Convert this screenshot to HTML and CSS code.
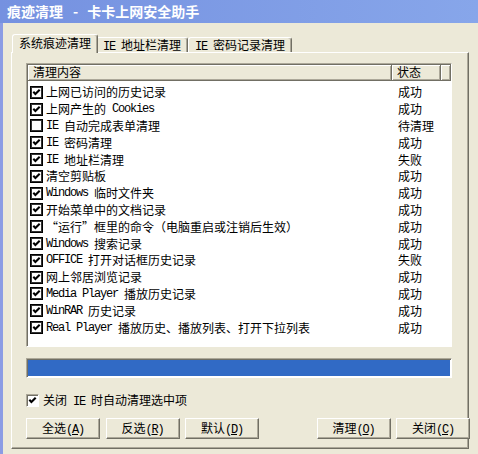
FILE: index.html
```html
<!DOCTYPE html>
<html lang="zh-CN">
<head>
    <meta charset="UTF-8">
    <meta name="viewport" content="width=device-width, initial-scale=1.0">
    <title>痕迹清理 - 卡卡上网安全助手</title>
    <link rel="stylesheet" href="styles.css">
</head>
<body>
    <svg class="defs" width="0" height="0" aria-hidden="true">
        <symbol id="tick" viewBox="0 0 9 9">
            <polyline points="1.3,3.8 3.4,6 7.7,1.7" fill="none" stroke="#000" stroke-width="2.1"/>
        </symbol>
    </svg>

    <div class="window">
        <div class="titlebar">痕迹清理<span class="sep">-</span>卡卡上网安全助手</div>

        <div class="frame">
            <div class="tabs">
                <div class="tab active">系统痕迹清理</div>
                <div class="tab"><span class="lat">IE </span>地址栏清理</div>
                <div class="tab"><span class="lat">IE </span>密码记录清理</div>
            </div>

            <div class="panel">
                <div class="listview">
                    <div class="lv-header">
                        <div class="hd hd-name">清理内容</div>
                        <div class="hd hd-state">状态</div>
                        <div class="hd hd-fill"></div>
                    </div>
                    <ul class="lv-rows">
                        <li class="row"><div class="name"><span class="cb"><svg><use href="#tick"/></svg></span>上网已访问的历史记录</div><div class="state">成功</div></li>
                        <li class="row"><div class="name"><span class="cb"><svg><use href="#tick"/></svg></span>上网产生的<span class="lat"> Cookies</span></div><div class="state">成功</div></li>
                        <li class="row"><div class="name"><span class="cb"></span><span class="lat">IE </span>自动完成表单清理</div><div class="state">待清理</div></li>
                        <li class="row"><div class="name"><span class="cb"><svg><use href="#tick"/></svg></span><span class="lat">IE </span>密码清理</div><div class="state">成功</div></li>
                        <li class="row"><div class="name"><span class="cb"><svg><use href="#tick"/></svg></span><span class="lat">IE </span>地址栏清理</div><div class="state">失败</div></li>
                        <li class="row"><div class="name"><span class="cb"><svg><use href="#tick"/></svg></span>清空剪贴板</div><div class="state">成功</div></li>
                        <li class="row"><div class="name"><span class="cb"><svg><use href="#tick"/></svg></span><span class="lat">Windows </span>临时文件夹</div><div class="state">成功</div></li>
                        <li class="row"><div class="name"><span class="cb"><svg><use href="#tick"/></svg></span>开始菜单中的文档记录</div><div class="state">成功</div></li>
                        <li class="row"><div class="name"><span class="cb"><svg><use href="#tick"/></svg></span>“运行”框里的命令（电脑重启或注销后生效）</div><div class="state">成功</div></li>
                        <li class="row"><div class="name"><span class="cb"><svg><use href="#tick"/></svg></span><span class="lat">Windows </span>搜索记录</div><div class="state">成功</div></li>
                        <li class="row"><div class="name"><span class="cb"><svg><use href="#tick"/></svg></span><span class="lat">OFFICE </span>打开对话框历史记录</div><div class="state">失败</div></li>
                        <li class="row"><div class="name"><span class="cb"><svg><use href="#tick"/></svg></span>网上邻居浏览记录</div><div class="state">成功</div></li>
                        <li class="row"><div class="name"><span class="cb"><svg><use href="#tick"/></svg></span><span class="lat">Media Player </span>播放历史记录</div><div class="state">成功</div></li>
                        <li class="row"><div class="name"><span class="cb"><svg><use href="#tick"/></svg></span><span class="lat">WinRAR </span>历史记录</div><div class="state">成功</div></li>
                        <li class="row"><div class="name"><span class="cb"><svg><use href="#tick"/></svg></span><span class="lat">Real Player </span>播放历史、播放列表、打开下拉列表</div><div class="state">成功</div></li>
                    </ul>
                </div>

                <div class="progress"><div class="progress-fill"></div></div>

                <label class="auto-clean">
                    <span class="box"><svg><use href="#tick"/></svg></span>
                    <span>关闭<span class="lat"> IE </span>时自动清理选中项</span>
                </label>

                <div class="buttons">
                    <button>全选<span class="lat">(<u>A</u>)</span></button>
                    <button>反选<span class="lat">(<u>R</u>)</span></button>
                    <button>默认<span class="lat">(<u>D</u>)</span></button>
                    <button class="push">清理<span class="lat">(<u>O</u>)</span></button>
                    <button>关闭<span class="lat">(<u>C</u>)</span></button>
                </div>
            </div>
        </div>
    </div>
</body>
</html>
```

FILE: styles.css
```css
body {
    margin: 0;
    font-family: "Noto Sans CJK SC", sans-serif;
    font-size: 12px;
    color: #000;
}

.defs {
    position: absolute;
}

.lat {
    font-family: "Liberation Mono", monospace;
    font-size: 12px;
    letter-spacing: -1.2px;
    white-space: pre;
}

.window {
    width: 478px;
    height: 454px;
    background-color: #ece9d8;
    overflow: hidden;
}

.titlebar {
    height: 23px;
    line-height: 22px;
    padding-left: 7px;
    color: white;
    font-size: 14px;
    font-weight: bold;
    background: linear-gradient(to right, #7591e0, #87a6ea);
}

.titlebar .sep {
    margin: 0 9px 0 10px;
}

.frame {
    height: 431px;
    box-sizing: border-box;
    border-left: 3px solid #8b9ce4;
    padding: 11px 0 0 8px;
}

/* tabs */
.tabs {
    display: flex;
    align-items: flex-end;
    height: 18px;
    padding-left: 3px;
}

.tab {
    height: 15px;
    box-sizing: border-box;
    padding: 0 6px;
    line-height: 13px;
    background-color: #ece9d8;
    border-top: 1px solid white;
    border-left: 1px solid white;
    border-right: 1px solid #716f64;
    box-shadow: inset -1px 0 #aca899;
    border-radius: 3px 3px 0 0;
    white-space: nowrap;
}

.tab.active {
    position: relative;
    z-index: 1;
    height: 19px;
    margin: 0 -2px -1px;
    line-height: 16px;
}

.panel {
    width: 458px;
    height: 397px;
    box-sizing: border-box;
    border-top: 1px solid white;
    border-left: 1px solid white;
    border-right: 1px solid #716f64;
    border-bottom: 1px solid #716f64;
    box-shadow: inset -1px -1px #aca899;
    padding: 10px 0 0 14px;
}

/* list view */
.listview {
    width: 426px;
    height: 284px;
    box-sizing: border-box;
    background-color: white;
    border: 1px solid;
    border-color: #aca899 white white #aca899;
    box-shadow: inset 1px 1px #716f64;
    padding: 1px 0 0 1px;
}

.lv-header {
    display: flex;
    height: 16px;
}

.hd {
    box-sizing: border-box;
    height: 16px;
    line-height: 14px;
    padding-left: 5px;
    background-color: #ece9d8;
    border-right: 1px solid #716f64;
    border-bottom: 1px solid #716f64;
    box-shadow: inset 1px 1px white, inset -1px -1px #aca899;
}

.hd-name {
    width: 364px;
}

.hd-state {
    width: 49px;
}

.hd-fill {
    flex: 1;
}

.lv-rows {
    list-style: none;
    margin: 0;
    padding: 3px 0 0;
}

.row {
    display: flex;
    align-items: center;
    height: 16.8px;
    line-height: 14px;
}

.name {
    display: flex;
    align-items: center;
    width: 364px;
    white-space: nowrap;
}

.cb {
    width: 13px;
    height: 13px;
    box-sizing: border-box;
    margin: 0 3px 0 2px;
    border: 1px solid #000;
    box-shadow: inset 0 0 0 1px #333;
    background-color: white;
    padding: 1px;
}

.cb svg,
.box svg {
    display: block;
    width: 9px;
    height: 9px;
}

.state {
    padding-left: 6px;
}

/* progress */
.progress {
    width: 426px;
    height: 20px;
    box-sizing: border-box;
    margin-top: 11px;
    border: 1px solid;
    border-color: #aca899 white white #aca899;
    box-shadow: inset 1px 1px #716f64;
    padding: 1px 1px 1px 1px;
    background-color: white;
}

.progress-fill {
    height: 100%;
    background-color: #316ac5;
}

/* auto clean option */
.auto-clean {
    display: flex;
    align-items: center;
    height: 14px;
    margin-top: 15px;
    white-space: nowrap;
}

.box {
    width: 13px;
    height: 13px;
    box-sizing: border-box;
    margin-right: 4px;
    border: 1px solid;
    border-color: #aca899 white white #aca899;
    box-shadow: inset 1px 1px #716f64;
    background-color: white;
    padding: 1px 0 0 1px;
}

/* buttons */
.buttons {
    display: flex;
    column-gap: 5.5px;
    margin: 11px -2px 0 0;
}

button {
    width: 74px;
    height: 21px;
    padding: 0;
    font-family: inherit;
    font-size: 12px;
    line-height: 14px;
    color: #000;
    background-color: #ece9d8;
    border: 1px solid;
    border-color: white #716f64 #716f64 white;
    box-shadow: inset -1px -1px #aca899;
}

button .lat {
    letter-spacing: -1.2px;
}

button.push {
    margin-left: auto;
}
```
